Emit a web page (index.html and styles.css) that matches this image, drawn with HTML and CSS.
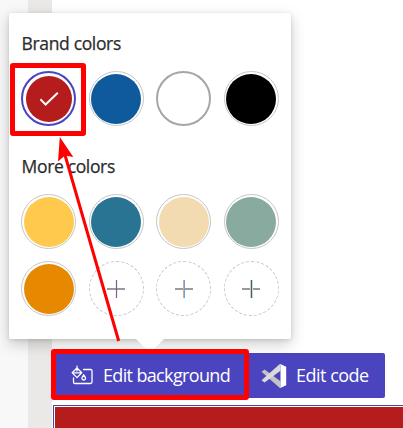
FILE: index.html
```html
<!DOCTYPE html>
<html lang="en">
<head>
<meta charset="utf-8">
<title>Edit background</title>
<link rel="stylesheet" href="styles.css">
</head>
<body>
<div class="app">
  <aside class="rail"></aside>
  <div class="gutter"></div>
  <main class="canvas">
    <div class="toolbar">
      <button class="tool tool-background">
        <svg class="bucket" viewBox="0 0 22 20" fill="none" stroke="#fff" stroke-width="1.3" stroke-linecap="round" stroke-linejoin="round">
          <path d="M12.5 4.5H19.5Q21 4.5 21 6V17Q21 18.5 19.5 18.5H4Q2.5 18.5 2.5 17V13"/>
          <path d="M6 3L10.8 7.8L6 12.6L1.2 7.8ZM1.2 7.8H10.8M6 6V1.2"/>
          <path d="M12.7 9.8Q10.9 12.3 10.9 13.2A1.8 1.8 0 0 0 14.5 13.2Q14.5 12.3 12.7 9.8Z"/>
        </svg>
        <span class="label-background">Edit background</span>
      </button>
      <button class="tool tool-code">
        <svg class="code-logo" viewBox="0 0 26 26">
          <path fill="#c3c3c3" d="M0.5 8.8L3.6 6.6L19.5 18.2V25L18.5 24.8Z"/>
          <path fill="#dadada" d="M0.5 17.2L3.6 19.4L19.5 7.8V1L18.5 1.2Z"/>
          <path fill="#fff" d="M18.8 .8L25.2 3.8V22.2L18.8 25.2Q19.5 24.8 19.5 24V2Q19.5 1.2 18.8 .8Z"/>
        </svg>
        <span class="label-code">Edit code</span>
      </button>
    </div>
    <div class="frame"><div class="page-fill"></div></div>
  </main>
</div>
<section class="popover">
  <h2 class="title-brand">Brand colors</h2>
  <div class="swatches">
    <div class="swatch selected"><i class="red"></i>
      <svg class="check" viewBox="0 0 20 16"><path d="M1.4 8.3L6.6 13.5L18.8 1.8" fill="none" stroke="#fff" stroke-width="2"/></svg>
    </div>
    <div class="swatch"><i class="blue"></i></div>
    <div class="swatch white"></div>
    <div class="swatch"><i class="black"></i></div>
  </div>
  <h2 class="title-more">More colors</h2>
  <div class="swatches">
    <div class="swatch"><i class="yellow"></i></div>
    <div class="swatch"><i class="teal"></i></div>
    <div class="swatch"><i class="sand"></i></div>
    <div class="swatch"><i class="sage"></i></div>
    <div class="swatch"><i class="orange"></i></div>
    <div class="swatch add"><svg viewBox="0 0 18 18"><path d="M0 9H18" stroke="#8f8f8f" stroke-width="1.8"/><path d="M9.5 0V18" stroke="#805a92" stroke-width="1.2"/></svg></div>
    <div class="swatch add"><svg viewBox="0 0 18 18"><path d="M0 9H18" stroke="#8f8f8f" stroke-width="1.8"/><path d="M8.5 0V18" stroke="#d0ad8c"/><path d="M9.5 0V18" stroke="#64a5e5"/></svg></div>
    <div class="swatch add"><svg viewBox="0 0 18 18"><path d="M0 9H18" stroke="#8f8f8f" stroke-width="1.8"/><path d="M8.5 0V18" stroke="#e6e69c"/><path d="M10.5 0V18" stroke="#bdf5fa"/><path d="M9.5 0V18" stroke="#59507c" stroke-width="1.2"/></svg></div>
  </div>
  <div class="beak"></div>
</section>
<div class="highlight highlight-swatch"></div>
<div class="highlight highlight-button"></div>
<svg class="arrow" viewBox="0 0 403 428">
  <path d="M118.7 341L65 155" stroke="#f00" stroke-width="3" fill="none"/>
  <path d="M59.8 137L73.3 157L65 155.5L58 161.5Z" fill="#f00"/>
</svg>
</body>
</html>
```
FILE: styles.css
```css
* { box-sizing: border-box; }

body {
  margin: 0;
  width: 403px;
  height: 428px;
  overflow: hidden;
  position: relative;
  background: #fff;
  font-family: "Open Sans", "Noto Sans", sans-serif;
}

.app { display: flex; height: 428px; }
.rail { width: 28px; background: #f8f8f8; }
.gutter { width: 24px; background: #eae9e8; }
.canvas { flex: 1; padding-top: 353px; min-width: 0; }

.toolbar {
  display: flex;
  width: 333px;
  height: 45px;
  background: #4a44bf;
  border-radius: 2px;
}

.tool {
  display: flex;
  align-items: center;
  padding: 0;
  border: 0;
  background: none;
  color: #fff;
  font: 400 18px/24px "Open Sans", "Noto Sans", sans-serif;
  white-space: nowrap;
}

.tool-background { width: 196px; padding-left: 19px; }
.tool-code { padding-left: 13px; }
.tool span { padding-bottom: 2px; }
.bucket { width: 22px; height: 20px; margin: 0 10px 1px 0; }
.code-logo { width: 26px; height: 26px; margin-right: 9px; }
.label-background { letter-spacing: -.65px; }
.label-code { letter-spacing: -.5px; }

.frame {
  height: 40px;
  margin: 7px -10px 0 1px;
  padding: 1px;
  background: #fff;
  border: 1px solid #4a44a8;
}

.page-fill { height: 100%; background: #b51c1c; }

.popover {
  position: absolute;
  left: 9px;
  top: 13px;
  width: 282px;
  height: 326px;
  padding: 18px 12px 0;
  background: #fff;
  border-radius: 2px;
  box-shadow: 0 5px 15px rgba(0, 0, 0, .2), 0 1px 4px rgba(0, 0, 0, .12);
}

h2 {
  margin: 0;
  padding-left: .6px;
  height: 24px;
  color: #2c2c2c;
  font-size: 17.5px;
  font-weight: 500;
  line-height: 24px;
  white-space: nowrap;
  letter-spacing: -.35px;
  -webkit-text-stroke: .25px #2c2c2c;
}

.title-more { margin-top: 28px; }

.swatches {
  display: grid;
  grid-template-columns: repeat(4, 55px);
  gap: 12px 12.67px;
  margin-top: 16px;
}

.swatch {
  position: relative;
  display: flex;
  align-items: center;
  justify-content: center;
  width: 55px;
  height: 55px;
  border: 1px solid #c6c6c6;
  border-radius: 50%;
}

.swatch i { width: 50px; height: 50px; border-radius: 50%; }
.selected { border: 2px solid #4a44bf; }
.swatch.selected i { width: 46px; height: 46px; }
.white { border: 2px solid #a6a6a6; }
.add { border-style: dashed; }
.add svg { width: 18px; height: 18px; }
.check { position: absolute; width: 20px; height: 16px; }

.red { background: #b51c1c; }
.blue { background: #0f5a9c; }
.black { background: #000; }
.yellow { background: #ffc94d; }
.teal { background: #287492; }
.sand { background: #f2dab1; }
.sage { background: #88aa9f; }
.orange { background: #e68800; }

.beak {
  position: absolute;
  left: 126px;
  top: 325px;
  width: 30px;
  height: 15px;
  background: #fff;
  clip-path: polygon(0 0, 100% 0, 50% 100%);
}

.highlight { position: absolute; border: 5px solid #f00; border-radius: 3px; }
.highlight-swatch { left: 10px; top: 63px; width: 76px; height: 73px; }
.highlight-button { left: 51px; top: 349px; width: 198px; height: 51px; }
.arrow { position: absolute; left: 0; top: 0; width: 403px; height: 428px; }
```
